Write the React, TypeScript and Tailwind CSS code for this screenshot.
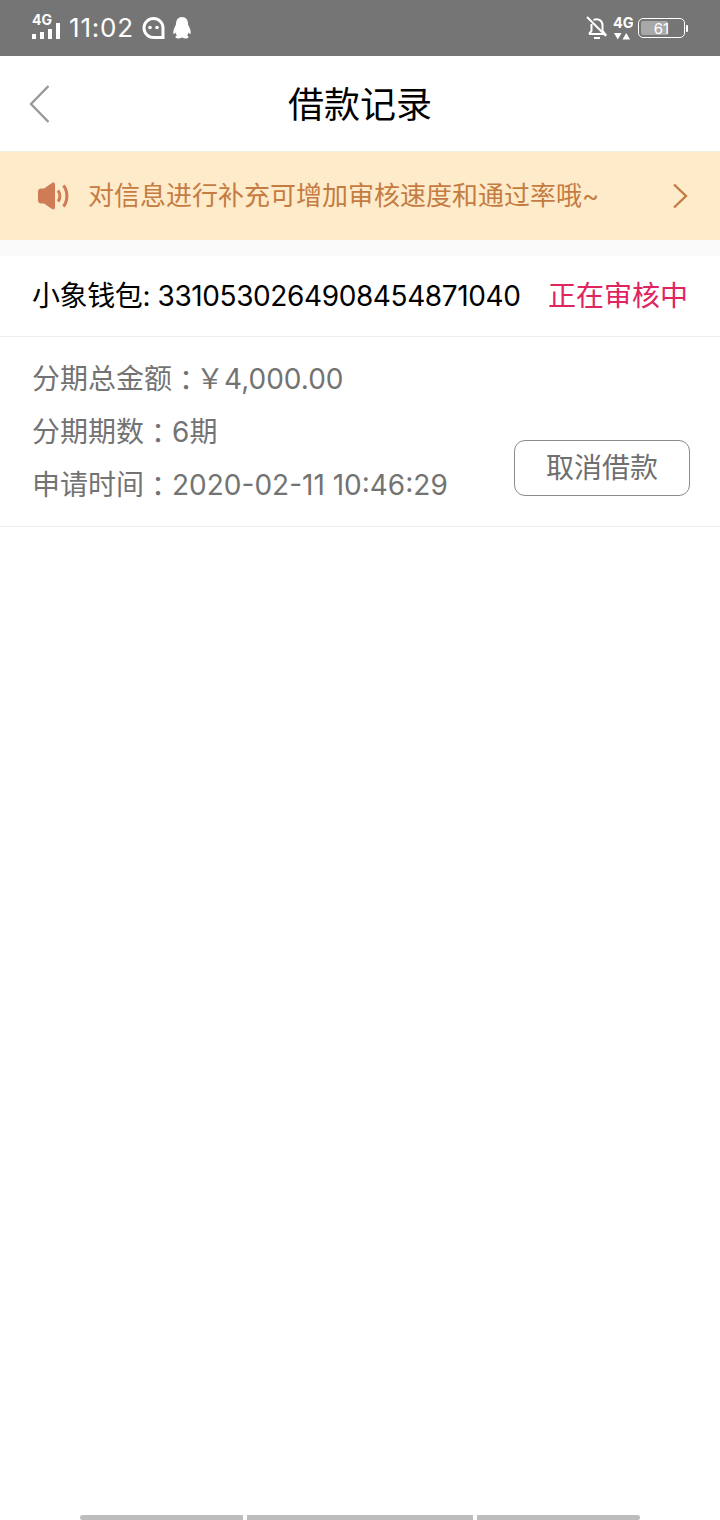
const cjk = "font-['Inter','Noto_Sans_CJK_SC',sans-serif]";

function StatusBar() {
  return (
    <div className="flex h-14 items-center justify-between bg-[#757575] pl-8 pr-8 text-white">
      <div className="flex items-center">
        <svg width="29" height="34" viewBox="0 0 29 34" fill="#fff">
          <text x="0" y="14" fontSize="14" fontWeight="700" fontFamily="Inter">4G</text>
          <rect x="0" y="23" width="4" height="5" />
          <rect x="8" y="21" width="4" height="7" />
          <rect x="16" y="18" width="4" height="10" />
          <rect x="24" y="12" width="4" height="16" />
        </svg>
        <span className="ml-2 text-[26px] leading-none font-normal tracking-[0.8px]">11:02</span>
        <svg className="ml-[8px]" width="23" height="23" viewBox="0 0 23 23" fill="none">
          <path d="M21 20.5H11.5a9.5 9.5 0 1 1 9.5-9.5c0 4 0 6 0 9.5z" stroke="#fff" strokeWidth="3" />
          <circle cx="8" cy="10.5" r="1.8" fill="#fff" />
          <circle cx="15" cy="10.5" r="1.8" fill="#fff" />
        </svg>
        <svg className="ml-[7px]" width="20" height="24" viewBox="0 0 20 24" fill="#fff">
          <path d="M10 1c4 0 6 3 6 7 0 1 1 2 2 5 1 3 1 5 0 5l-1.500-1.500c-.3 1.500-1 2.500-1.500 3 1.500.6 2 1.500 1 2.500-1 .7-4 .5-6-.5-2 1-5 1.200-6 .5-1-1-.5-1.900 1-2.500-.5-.5-1.200-1.500-1.500-3L2 18c-1 0-1-2 0-5 1-3 2-4 2-5 0-4 2-7 6-7z" />
        </svg>
      </div>
      <div className="flex items-center">
        <svg width="24" height="26" viewBox="0 0 24 26" fill="none" stroke="#fff" strokeWidth="2">
          <path d="M4 19h16l-2.500-3V10a6 6 0 0 0-9-5M6.500 9v7L4 19" />
          <path d="M2 2l19 19" />
          <path d="M9 23h6" />
        </svg>
        <svg className="ml-[4px]" width="20" height="26" viewBox="0 0 20 26" fill="#fff">
          <text x="0" y="13" fontSize="14.500" fontWeight="700" fontFamily="Inter">4G</text>
          <path d="M1 18h7.500l-3.750 6.500zM9.500 24.500h7.500l-3.750-6.500z" />
        </svg>
        <div className="ml-[5px] flex items-center">
          <div className="relative flex h-[20px] w-[47px] items-center justify-center rounded-[5px] border-[1.500px] border-white">
            <div className="absolute left-[1.500px] top-[1.500px] h-[14px] w-[27px] rounded-[2px] bg-[#a8a8a8]" />
            <span className="relative text-[15px] leading-none font-normal">61</span>
          </div>
          <div className="ml-[1px] h-[7px] w-[2px] rounded-r-[1px] bg-white" />
        </div>
      </div>
    </div>
  );
}

function InfoRow({ label, value }: { label: string; value: string }) {
  return (
    <div className="flex text-[28px] leading-[53px] text-[#737373]">
      <span>{label}</span>
      <span className="font-['Noto_Sans_CJK_TC']">：</span>
      <span>{value}</span>
    </div>
  );
}

export default function App() {
  return (
    <div className={`${cjk} relative h-[1520px] overflow-hidden bg-white`}>
      <StatusBar />

      <div className="relative flex h-[95px] items-center justify-center pt-[2px]">
        <svg className="absolute left-[29px] top-[28px]" width="22" height="40" viewBox="0 0 22 40" fill="none" stroke="#999" strokeWidth="2.400">
          <path d="M19.500 2 2 20l17.500 18" />
        </svg>
        <span className="text-[36px] text-black">借款记录</span>
      </div>

      <div className="flex h-[89px] items-center border-t border-[#f3eee3] bg-[#feebca] pl-[38px] pr-[32px] text-[#c47c42]">
        <svg width="32" height="30" viewBox="0 0 32 30" fill="#cf7b56">
          <path d="M0 11c0-2 1-3.500 3-3.500h3l8-5.500c1.500-1 3-.5 3 1.500v23c0 2-1.500 2.500-3 1.500l-8-5.500H3c-2 0-3-1.500-3-3.500z" />
          <path d="M20 9.500c2.500 3 2.500 8 0 11" fill="none" stroke="#cf7b56" strokeWidth="3" />
          <path d="M25.500 4.500c4.500 6 4.500 15 0 21" fill="none" stroke="#cf7b56" strokeWidth="3" />
        </svg>
        <span className="ml-[18px] flex-1 text-[26px] leading-none">对信息进行补充可增加审核速度和通过率哦~</span>
        <svg width="16" height="26" viewBox="0 0 16 26" fill="none" stroke="#c47c42" strokeWidth="2.400">
          <path d="M2 1.500 14 13 2 24.500" />
        </svg>
      </div>

      <div className="h-4 bg-[#f9f9f9]" />

      <div className="flex h-[81px] items-center justify-between border-b border-[#eeeeee] px-8">
        <span className="text-[28px] tracking-[-0.4px] text-black">小象钱包: 3310530264908454871040</span>
        <span className="text-[28px] text-[#e0245e]">正在审核中</span>
      </div>

      <div className="relative h-[190px] border-b border-[#eeeeee] pl-8 pt-[16px]">
        <div className="flex text-[28px] leading-[53px] text-[#737373]">
          <span>分期总金额</span>
          <span className="font-['Noto_Sans_CJK_TC'] tracking-[-4px]">：</span>
          <span>￥4,000.00</span>
        </div>
        <InfoRow label="分期期数" value="6期" />
        <InfoRow label="申请时间" value="2020-02-11 10:46:29" />
        <button className="absolute right-[30px] top-[103px] flex h-[56px] w-[176px] items-center justify-center rounded-[11px] border border-[#8c8c8c] text-[28px] text-[#6f6f6f]">
          取消借款
        </button>
      </div>

      <div className="absolute bottom-[0px] left-[80px] flex h-[5px] w-[560px] gap-1">
        <div className="w-[163px] rounded-l-[3px] bg-[#bdbdbd]" />
        <div className="w-[226px] bg-[#bdbdbd]" />
        <div className="flex-1 rounded-r-[3px] bg-[#bdbdbd]" />
      </div>
    </div>
  );
}
